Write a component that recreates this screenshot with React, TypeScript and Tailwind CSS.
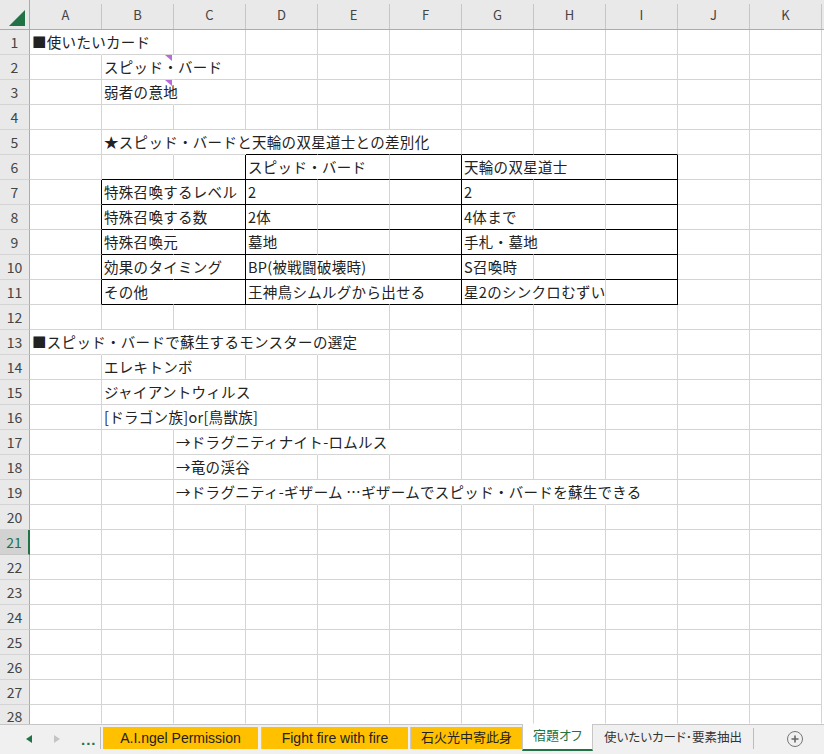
import React from 'react'

type Cell = { t?: string; r?: 'n' | 'k'; b?: 'k'; c?: boolean }

const COLS = ['A', 'B', 'C', 'D', 'E', 'F', 'G', 'H', 'I', 'J', 'K']
const ROW_COUNT = 28

const RIGHT = {
  g: 'border-r-[#d4d4d4]',
  n: 'border-r-transparent',
  k: 'border-r-black',
}
const BOTTOM = {
  g: 'border-b-[#d4d4d4]',
  k: 'border-b-black',
  n: 'border-b-transparent',
}

function tableRow(label: string, d: string, g: string, dOver = 0, gOver = 0): Record<number, Cell> {
  return {
    0: { r: 'k' },
    1: { t: label, r: 'n', b: 'k' },
    2: { r: 'k', b: 'k' },
    3: { t: d, r: dOver >= 1 ? 'n' : undefined, b: 'k' },
    4: { r: dOver >= 2 ? 'n' : undefined, b: 'k' },
    5: { r: 'k', b: 'k' },
    6: { t: g, r: gOver >= 1 ? 'n' : undefined, b: 'k' },
    7: { b: 'k' },
    8: { r: 'k', b: 'k' },
  }
}

const ROWS: Record<number, Record<number, Cell>> = {
  1: { 0: { t: '■使いたいカード', r: 'n' } },
  2: { 1: { t: 'スピッド・バード', r: 'n', c: true } },
  3: { 1: { t: '弱者の意地', r: 'n', c: true } },
  5: {
    1: { t: '★スピッド・バードと天輪の双星道士との差別化', r: 'n' },
    2: { r: 'n' },
    3: { r: 'n', b: 'k' },
    4: { r: 'n', b: 'k' },
    5: { b: 'k' },
    6: { b: 'k' },
    7: { b: 'k' },
    8: { b: 'k' },
  },
  6: {
    1: { b: 'k' },
    2: { r: 'k', b: 'k' },
    3: { t: 'スピッド・バード', r: 'n', b: 'k' },
    4: { b: 'k' },
    5: { r: 'k', b: 'k' },
    6: { t: '天輪の双星道士', r: 'n', b: 'k' },
    7: { b: 'k' },
    8: { r: 'k', b: 'k' },
  },
  7: tableRow('特殊召喚するレベル', '2', '2'),
  8: tableRow('特殊召喚する数', '2体', '4体まで'),
  9: tableRow('特殊召喚元', '墓地', '手札・墓地', 0, 1),
  10: tableRow('効果のタイミング', 'BP(被戦闘破壊時)', 'S召喚時', 1),
  11: tableRow('その他', '王神鳥シムルグから出せる', '星2のシンクロむずい', 2, 1),
  13: {
    0: { t: '■スピッド・バードで蘇生するモンスターの選定', r: 'n' },
    1: { r: 'n' },
    2: { r: 'n' },
    3: { r: 'n' },
  },
  14: { 1: { t: 'エレキトンボ', r: 'n' } },
  15: { 1: { t: 'ジャイアントウィルス', r: 'n' }, 2: { r: 'n' } },
  16: { 1: { t: '[ドラゴン族]or[鳥獣族]', r: 'n' }, 2: { r: 'n' } },
  17: { 2: { t: '→ドラグニティナイト-ロムルス', r: 'n' }, 3: { r: 'n' }, 4: { r: 'n' } },
  18: { 2: { t: '→竜の渓谷', r: 'n' } },
  19: {
    2: { t: '→ドラグニティ-ギザーム …ギザームでスピッド・バードを蘇生できる', r: 'n' },
    3: { r: 'n' },
    4: { r: 'n' },
    5: { r: 'n' },
    6: { r: 'n' },
    7: { r: 'n' },
  },
}

const ACTIVE_ROW = 21

function HeaderRow() {
  return (
    <div className="flex h-[30px] shrink-0 border-b border-[#ababab] bg-[#e9e9e9]">
      <div className="flex w-[30px] shrink-0 items-start justify-end border-r border-[#ababab]">
        <svg width="29" height="29" viewBox="0 0 29 29">
          <polygon points="25,10 25,26 9,26" fill="#217346" />
        </svg>
      </div>
      {COLS.map((c) => (
        <div key={c} className="flex w-[72px] shrink-0">
          <div className="flex flex-1 items-center justify-center pt-px text-[13px] text-[#444]">{c}</div>
          <div className="mt-[4px] w-px bg-[#c6c6c6]" />
        </div>
      ))}
      <div className="flex-1" />
    </div>
  )
}

function SheetRow({ n }: { n: number }) {
  const data = ROWS[n] ?? {}
  const active = n === ACTIVE_ROW
  const last = n === ROW_COUNT
  // the last row is cut by the sheet tab bar, as in Excel
  return (
    <div className={last ? 'flex h-[25px] min-h-0 shrink' : 'flex h-[25px] shrink-0'}>
      <div
        className={
          active
            ? 'flex w-[30px] shrink-0 items-center justify-center border-b border-r-2 border-b-[#c6c6c6] border-r-[#217346] bg-[#d2d2d2] pb-px text-[14px] leading-none text-[#217346]'
            : last
              ? 'flex w-[30px] shrink-0 items-start justify-center border-r border-r-[#ababab] bg-[#e9e9e9] pt-[4px] text-[14px] leading-none text-[#444]'
              : 'flex w-[30px] shrink-0 items-center justify-center border-b border-r border-b-[#d4d4d4] border-r-[#ababab] bg-[#e9e9e9] pb-px text-[14px] leading-none text-[#444]'
        }
      >
        {n}
      </div>
      {COLS.map((c, i) => {
        const cell = data[i] ?? {}
        return (
          <div
            key={c}
            className={`relative flex w-[72px] shrink-0 items-center whitespace-nowrap border-b border-r pl-[2px] text-[14.5px] tracking-[0.3px] text-[#222] ${RIGHT[cell.r ?? 'g']} ${BOTTOM[last ? 'n' : cell.b ?? 'g']}`}
          >
            {cell.t}
            {cell.c && (
              <svg width="7" height="6" viewBox="0 0 7 6" className="absolute right-[1px] top-0">
                <polygon points="0,0 7,0 7,6" fill="#bb6bd9" />
              </svg>
            )}
          </div>
        )
      })}
      <div className="flex-1" />
    </div>
  )
}

function TabBar() {
  return (
    <div className="flex h-[30px] shrink-0 items-start border-t border-[#c6c6c6] bg-[#f0f0f0] text-[14px] text-[#222] [font-family:'Liberation_Sans','Noto_Sans_CJK_JP',sans-serif]">
      <div className="flex h-[28px] w-[100px] shrink-0 items-center">
        <svg width="6" height="8" viewBox="0 0 6 8" className="ml-[26px]">
          <polygon points="6,0 6,8 0,4" fill="#217346" />
        </svg>
        <svg width="6" height="8" viewBox="0 0 6 8" className="ml-[22px]">
          <polygon points="0,0 0,8 6,4" fill="#c4c4c4" />
        </svg>
        <span className="ml-[21px] text-[15px] font-bold leading-none tracking-[1px] text-[#217346]">...</span>
      </div>
      <div className="mt-[2px] h-[22px] w-px bg-[#bdbdbd]" />
      <div className="ml-[2px] mt-[2px] flex h-[22px] w-[155px] shrink-0 items-center justify-center bg-[#ffc000]">
        A.I.ngel Permission
      </div>
      <div className="mt-[2px] h-[22px] w-[4px] shrink-0 border-r border-[#c8c8c8]" />
      <div className="mt-[2px] flex h-[22px] w-[146px] shrink-0 items-center justify-center bg-[#ffc000]">
        Fight fire with fire
      </div>
      <div className="mt-[2px] h-[22px] w-[3px] shrink-0 border-r border-[#c8c8c8]" />
      <div className="mt-[2px] flex h-[22px] w-[111px] shrink-0 items-center justify-center bg-[#ffc000] text-[13px] [font-feature-settings:'palt']">
        石火光中寄此身
      </div>
      <div className="-mt-px flex h-[27px] w-[71px] shrink-0 items-center justify-center border-x border-b-2 border-x-[#c6c6c6] border-b-[#217346] bg-white pb-px text-[13px] text-[#217346] [font-feature-settings:'palt']">
        宿題オフ
      </div>
      <div className="mt-[2px] flex h-[22px] w-[160px] shrink-0 items-center justify-center text-[12.5px] text-[#333] [font-feature-settings:'palt']">
        使いたいカード･要素抽出
      </div>
      <div className="mt-[3px] h-[21px] w-px shrink-0 bg-[#bdbdbd]" />
      <div className="ml-[33px] mt-[6px] flex h-[16px] w-[16px] shrink-0 items-center justify-center rounded-full border-[1.5px] border-[#777]">
        <svg width="10" height="10" viewBox="0 0 10 10">
          <path d="M5 1.5V8.5M1.5 5H8.5" stroke="#666" strokeWidth="1.6" />
        </svg>
      </div>
    </div>
  )
}

export default function App() {
  const rows = Array.from({ length: ROW_COUNT }, (_, i) => i + 1)
  return (
    <div className="flex h-[754px] w-[824px] flex-col overflow-hidden bg-white [font-family:'Noto_Sans_CJK_JP','Noto_Sans',sans-serif]">
      <HeaderRow />
      <div className="flex flex-1 flex-col overflow-hidden">
        {rows.map((n) => (
          <SheetRow key={n} n={n} />
        ))}
      </div>
      <TabBar />
    </div>
  )
}
